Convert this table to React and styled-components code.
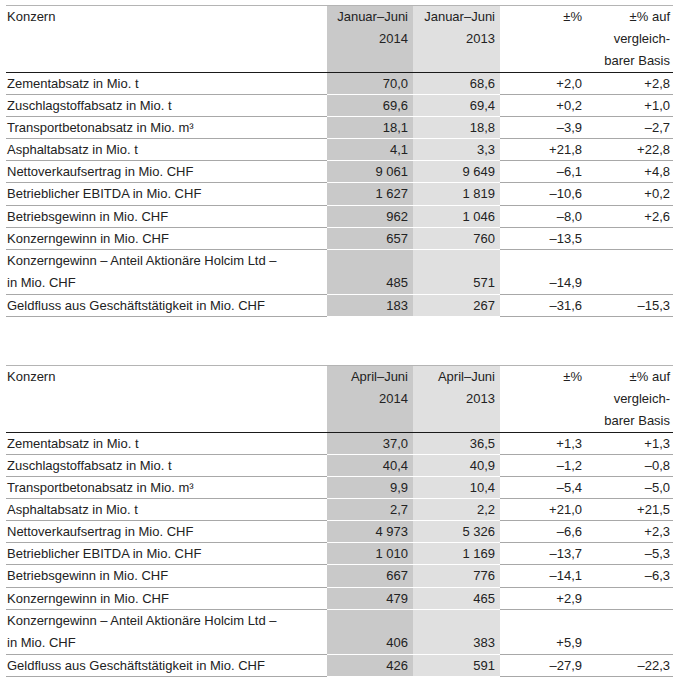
import React from "react";
import styled, { createGlobalStyle } from "styled-components";

const Global = createGlobalStyle`
  html, body { margin: 0; padding: 0; background: #fff; }
  body { font-family: "Liberation Sans", Arial, sans-serif; color: #222; }
`;

const Page = styled.div`
  padding: 5px 3px 0 6px;
  display: flex;
  flex-direction: column;
  gap: 48px;
`;

const Table = styled.table`
  width: 667px;
  border-collapse: collapse;
  table-layout: fixed;
  border-top: 1px solid #b4b4b4;
  font-size: 13px;
`;

const bg = { dark: "#c9c9c9", light: "#e0e0e0" };

const Cell = styled.td`
  padding: 0 ${(p) => (p.$last ? 3 : 5)}px 0 ${(p) => (p.$label ? 1 : 0)}px;
  text-align: ${(p) => (p.$label ? "left" : "right")};
  vertical-align: ${(p) => (p.$head ? "top" : "bottom")};
  background: ${(p) => (p.$tone ? bg[p.$tone] : "transparent")};
  line-height: ${(p) => (p.$double || p.$head ? "22px" : "21.1px")};
  font-weight: normal;
  border-bottom: 1px solid
    ${(p) => (p.$head ? "#1a1a1a" : p.$tone ? "#ffffff" : "#a8a8a8")};
  white-space: nowrap;
`;

const Col = styled.col`
  width: ${(p) => p.$w}px;
`;

const tables = [
  {
    period: "Januar–Juni",
    rows: [
      ["Zementabsatz in Mio. t", "70,0", "68,6", "+2,0", "+2,8"],
      ["Zuschlagstoffabsatz in Mio. t", "69,6", "69,4", "+0,2", "+1,0"],
      ["Transportbetonabsatz in Mio. m³", "18,1", "18,8", "–3,9", "–2,7"],
      ["Asphaltabsatz in Mio. t", "4,1", "3,3", "+21,8", "+22,8"],
      ["Nettoverkaufsertrag in Mio. CHF", "9 061", "9 649", "–6,1", "+4,8"],
      ["Betrieblicher EBITDA in Mio. CHF", "1 627", "1 819", "–10,6", "+0,2"],
      ["Betriebsgewinn in Mio. CHF", "962", "1 046", "–8,0", "+2,6"],
      ["Konzerngewinn in Mio. CHF", "657", "760", "–13,5", ""],
      [["Konzerngewinn – Anteil Aktionäre Holcim Ltd –", "in Mio. CHF"], "485", "571", "–14,9", ""],
      ["Geldfluss aus Geschäftstätigkeit in Mio. CHF", "183", "267", "–31,6", "–15,3"],
    ],
  },
  {
    period: "April–Juni",
    rows: [
      ["Zementabsatz in Mio. t", "37,0", "36,5", "+1,3", "+1,3"],
      ["Zuschlagstoffabsatz in Mio. t", "40,4", "40,9", "–1,2", "–0,8"],
      ["Transportbetonabsatz in Mio. m³", "9,9", "10,4", "–5,4", "–5,0"],
      ["Asphaltabsatz in Mio. t", "2,7", "2,2", "+21,0", "+21,5"],
      ["Nettoverkaufsertrag in Mio. CHF", "4 973", "5 326", "–6,6", "+2,3"],
      ["Betrieblicher EBITDA in Mio. CHF", "1 010", "1 169", "–13,7", "–5,3"],
      ["Betriebsgewinn in Mio. CHF", "667", "776", "–14,1", "–6,3"],
      ["Konzerngewinn in Mio. CHF", "479", "465", "+2,9", ""],
      [["Konzerngewinn – Anteil Aktionäre Holcim Ltd –", "in Mio. CHF"], "406", "383", "+5,9", ""],
      ["Geldfluss aus Geschäftstätigkeit in Mio. CHF", "426", "591", "–27,9", "–22,3"],
    ],
  },
];

function KeyTable({ period, rows }) {
  return (
    <Table>
      <colgroup>
        <Col $w={321} />
        <Col $w={86} />
        <Col $w={87} />
        <Col $w={87} />
        <Col $w={86} />
      </colgroup>
      <thead>
        <tr>
          <Cell as="th" $head $label>Konzern</Cell>
          <Cell as="th" $head $tone="dark">
            {period}
            <br />
            2014
          </Cell>
          <Cell as="th" $head $tone="light">
            {period}
            <br />
            2013
          </Cell>
          <Cell as="th" $head>±%</Cell>
          <Cell as="th" $head $last>
            ±% auf
            <br />
            vergleich-
            <br />
            barer Basis
          </Cell>
        </tr>
      </thead>
      <tbody>
        {rows.map(([label, a, b, c, d], i) => {
          const dbl = Array.isArray(label);
          return (
            <tr key={i}>
              <Cell $label $double={dbl}>
                {dbl ? (
                  <>
                    {label[0]}
                    <br />
                    {label[1]}
                  </>
                ) : (
                  label
                )}
              </Cell>
              <Cell $tone="dark" $double={dbl}>{a}</Cell>
              <Cell $tone="light" $double={dbl}>{b}</Cell>
              <Cell $double={dbl}>{c}</Cell>
              <Cell $last $double={dbl}>{d}</Cell>
            </tr>
          );
        })}
      </tbody>
    </Table>
  );
}

export default function App() {
  return (
    <>
      <Global />
      <Page>
        {tables.map((t) => (
          <KeyTable key={t.period} {...t} />
        ))}
      </Page>
    </>
  );
}
